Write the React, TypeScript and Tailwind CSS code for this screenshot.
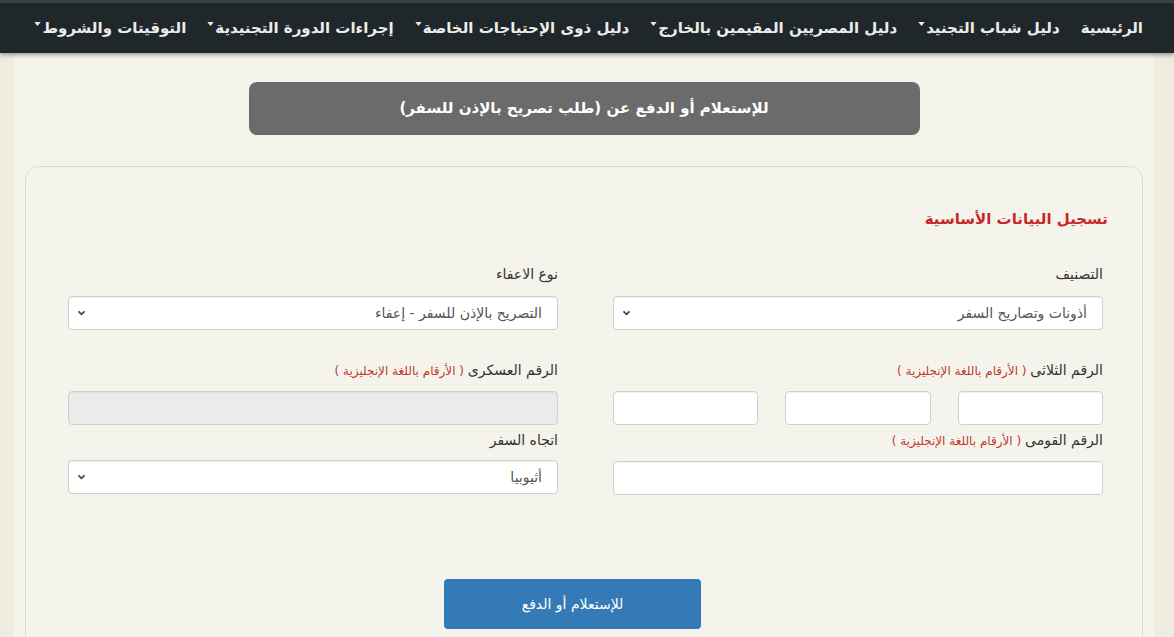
import React from "react";

const navItems: { label: string; caret: boolean }[] = [
  { label: "الرئيسية", caret: false },
  { label: "دليل شباب التجنيد", caret: true },
  { label: "دليل المصريين المقيمين بالخارج", caret: true },
  { label: "دليل ذوى الإحتياجات الخاصة", caret: true },
  { label: "إجراءات الدورة التجنيدية", caret: true },
  { label: "التوقيتات والشروط", caret: true },
];

const font = { fontFamily: '"DejaVu Sans", "Noto Sans", sans-serif' };

const Caret = () => (
  <svg width="7" height="4" viewBox="0 0 8 5" className="mt-[-9px]">
    <path d="M0 0h8L4 5z" fill="currentColor" />
  </svg>
);

const Chevron = () => (
  <svg width="9" height="6" viewBox="0 0 10 7" className="text-[#444]">
    <path d="M1.5 1.5 5 5l3.5-3.5" fill="none" stroke="currentColor" strokeWidth="2" />
  </svg>
);

const Note = () => (
  <span className="text-[12px] text-[#c0392b]"> ( الأرقام باللغة الإنجليزية )</span>
);

function FakeSelect({ value }: { value: string }) {
  return (
    <div className="relative h-[34px] w-full rounded-[4px] border border-[#cfcfcf] bg-white shadow-[inset_0_1px_1px_rgba(0,0,0,0.06)]">
      <div className="flex h-full items-center pr-[15px] text-[14px] text-[#555]">{value}</div>
      <div className="absolute left-[8px] top-[13px]">
        <Chevron />
      </div>
    </div>
  );
}

function TextBox({ disabled = false }: { disabled?: boolean }) {
  return (
    <div
      className={
        "h-[34px] w-full rounded-[4px] border border-[#cfcfcf] shadow-[inset_0_1px_1px_rgba(0,0,0,0.06)] " +
        (disabled ? "bg-[#ebebeb]" : "bg-white")
      }
    />
  );
}

export default function App() {
  return (
    <div dir="rtl" style={font} className="h-[637px] w-[1174px] overflow-hidden bg-[#eeebdf]">
      {/* top navigation */}
      <nav className="relative z-10 h-[53px] border-t-[3px] border-[#3a4142] bg-[#1f272a] shadow-[0_2px_4px_rgba(0,0,0,0.35)]">
        <ul className="flex h-full items-center gap-[21px] pr-[31px] text-[15px] font-bold text-[#ececec]">
          {navItems.map((item) => (
            <li key={item.label} className="flex items-center gap-[1px] whitespace-nowrap">
              <span>{item.label}</span>
              {item.caret && <Caret />}
            </li>
          ))}
        </ul>
      </nav>

      {/* page container */}
      <div className="ml-[14px] mr-[20px] h-full bg-[#f4f3ea] px-[11px] pt-[29px]">
        <div className="mx-auto flex h-[53px] w-[671px] items-center justify-center rounded-[8px] bg-[#6b6b6b] text-[15px] font-bold text-white">
          للإستعلام أو الدفع عن (طلب تصريح بالإذن للسفر)
        </div>

        <div className="mt-[31px] h-[520px] rounded-t-[14px] border border-[#dcdbcd] bg-[#f5f4ec] pl-[42px] pr-[39px] pt-[40px]">
          <h2 className="mr-[-5px] text-[15px] font-bold leading-[24px] text-[#c62828]">تسجيل البيانات الأساسية</h2>

          <div className="mt-[33px] grid grid-cols-2 gap-x-[55px] text-[14px] text-[#333]">
            {/* row 1 */}
            <div>
              <div className="mb-[12px] leading-[20px]">التصنيف</div>
              <FakeSelect value="أذونات وتصاريح السفر" />
            </div>
            <div>
              <div className="mb-[12px] leading-[20px]">نوع الاعفاء</div>
              <FakeSelect value="التصريح بالإذن للسفر - إعفاء" />
            </div>

            {/* row 2 */}
            <div className="mt-[30px]">
              <div className="mb-[10px] leading-[20px]">
                الرقم الثلاثى
                <Note />
              </div>
              <div className="grid grid-cols-3 gap-[27px]">
                <TextBox />
                <TextBox />
                <TextBox />
              </div>
            </div>
            <div className="mt-[30px]">
              <div className="mb-[10px] leading-[20px]">
                الرقم العسكرى
                <Note />
              </div>
              <TextBox disabled />
            </div>

            {/* row 3 */}
            <div className="mt-[5px]">
              <div className="mb-[10px] leading-[20px]">
                الرقم القومى
                <Note />
              </div>
              <TextBox />
            </div>
            <div className="mt-[5px]">
              <div className="mb-[10px] leading-[20px]">اتجاه السفر</div>
              <FakeSelect value="أثيوبيا" />
            </div>
          </div>

          <div className="mt-[84px] flex">
            <button className="mr-[402px] h-[50px] w-[257px] rounded-[4px] bg-[#337ab7] text-[14px] text-white">
              للإستعلام أو الدفع
            </button>
          </div>
        </div>
      </div>
    </div>
  );
}
